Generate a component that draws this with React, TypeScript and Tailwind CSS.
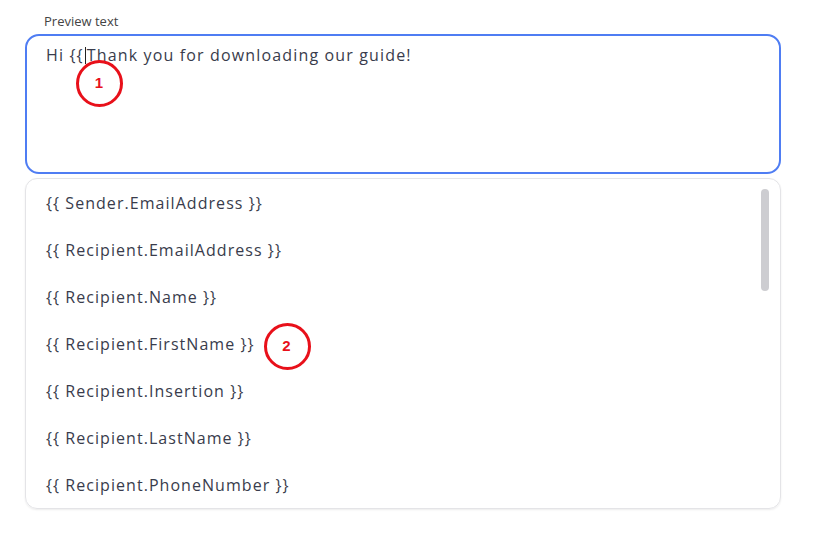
const tags = [
    "{{ Sender.EmailAddress }}",
    "{{ Recipient.EmailAddress }}",
    "{{ Recipient.Name }}",
    "{{ Recipient.FirstName }}",
    "{{ Recipient.Insertion }}",
    "{{ Recipient.LastName }}",
    "{{ Recipient.PhoneNumber }}",
];

const Marker = ({ n }: { n: string }) => (
    <span className="flex h-[47px] w-[47px] items-center justify-center rounded-full border-[3px] border-[#e8101a] bg-white font-['Liberation_Sans',sans-serif] text-[15px] font-bold text-[#e8101a]">
        {n}
    </span>
);

const App = () => {
    return (
        <div className="h-[558px] w-[828px] bg-white pl-[25px] pr-[47px] pt-[12px] font-['Open_Sans',sans-serif] text-[#393c4c]">
            <p className="pl-[19px] text-[13px] text-[#444]">Preview text</p>

            {/* textarea */}
            <div className="relative mt-[2px] h-[140px] rounded-[14px] border-2 border-[#4f7df3] px-[19px] pt-[7px] text-[16px] font-medium tracking-[1.15px]">
                <span>Hi {"{{"}</span>
                <span className="mx-[1px] inline-block h-[17px] w-px translate-y-[3px] bg-[#222]" />
                <span>Thank you for downloading our guide!</span>
                <div className="absolute left-[49px] top-[24px]">
                    <Marker n="1" />
                </div>
            </div>

            {/* dropdown */}
            <div className="relative mt-[4px] h-[331px] overflow-hidden rounded-[12px] border border-[#e4e4e7] shadow-[0_1px_2px_rgba(0,0,0,0.08)]">
                <ul className="flex flex-col pt-[12px] pl-[20px] text-[16px] font-medium tracking-[1.05px]">
                    {tags.map((t, i) => (
                        <li key={t} className="flex h-[47px] items-start">
                            <span>{t}</span>
                            {i === 3 && (
                                <span className="ml-[9px] -mt-[9px]">
                                    <Marker n="2" />
                                </span>
                            )}
                        </li>
                    ))}
                </ul>
                <div className="absolute right-[11px] top-[10px] h-[102px] w-[8px] rounded-full bg-[#cdcdd1]" />
            </div>
        </div>
    );
};

export default App;
